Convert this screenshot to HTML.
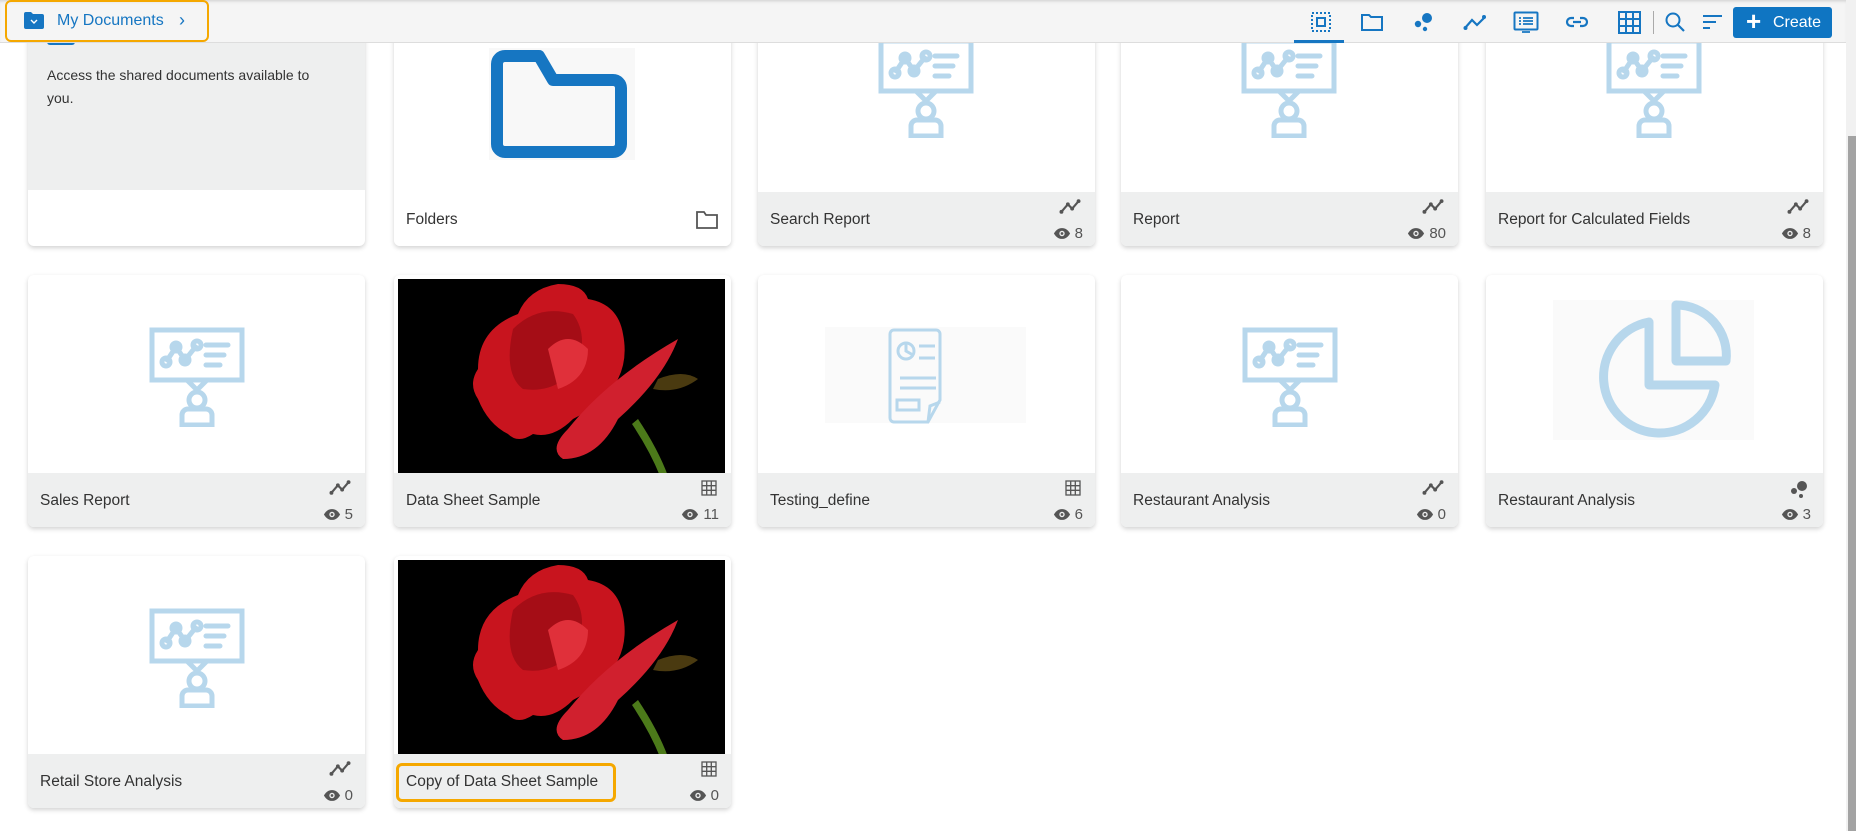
<!DOCTYPE html>
<html><head><meta charset="utf-8"><style>
*{box-sizing:border-box;margin:0;padding:0}
body{width:1856px;height:831px;overflow:hidden;background:#fff;font-family:"Liberation Sans",sans-serif;position:relative;color:#333}
.hdr{position:absolute;left:0;top:0;width:1846px;height:43px;background:#f5f5f5;border-bottom:1px solid #ddd;box-shadow:inset 0 3px 3px -2px #ccc;z-index:5}
.crumb{position:absolute;left:5px;top:0;width:204px;height:42px;border:2.5px solid #f5a800;border-radius:6px}
.crumb .t{position:absolute;left:50px;top:10px;font-size:16px;color:#1676c2}
.hi{position:absolute;top:11px}
.create{position:absolute;left:1733px;top:7px;width:99px;height:31px;background:#0f75c2;border-radius:3px;color:#fff;font-size:16px;line-height:31px;padding-left:40px}
.card{position:absolute;width:337px;height:252px;border-radius:6px;background:#fff;box-shadow:0 2px 5px rgba(0,0,0,.18);overflow:hidden}
.ft{position:absolute;left:0;bottom:0;width:100%;height:54px;background:#eeefef}
.ft .n{position:absolute;left:12px;top:19px;font-size:15.5px;color:#333}
.ft .ty{position:absolute;right:14px;top:7px}
.ft .ey{position:absolute;right:12px;bottom:4px;font-size:15px;color:#555;display:flex;align-items:center;gap:4px}
.sb{position:absolute;left:1846px;top:0;width:10px;height:831px;background:#f1f1f1}
.sb div{position:absolute;left:2px;top:136px;width:8px;height:695px;background:#a3a3a3}
</style></head><body>
<svg width="0" height="0" style="position:absolute"><defs>
<symbol id="pres" viewBox="0 0 96 100"><g fill="none" stroke="#b7d7ec" stroke-width="5"><rect x="3" y="3" width="90" height="50"/><path d="M38 53l10 10 10-10"/><circle cx="48" cy="73" r="8"/><path d="M33 98v-10a6 6 0 0 1 6-6h18a6 6 0 0 1 6 6v10z"/><path d="M17 35l10-15 9 13 12-15" /><circle cx="17" cy="35" r="4"/><circle cx="27" cy="20" r="4"/><circle cx="36" cy="33" r="4"/><circle cx="48" cy="18" r="4"/><path d="M57 18h22M57 28h18M57 38h14" stroke-linecap="round"/></g></symbol>
<symbol id="line" viewBox="0 0 20 14"><path d="M2 12l6-7 4 4 6-7" fill="none" stroke="#555" stroke-width="2"/><circle cx="2" cy="12" r="1.8" fill="#555"/><circle cx="8" cy="5" r="1.8" fill="#555"/><circle cx="12" cy="9" r="1.8" fill="#555"/><circle cx="18" cy="2" r="1.8" fill="#555"/></symbol>
<symbol id="grid" viewBox="0 0 16 16"><g fill="none" stroke="#555" stroke-width="1.3"><rect x="1" y="1" width="14" height="14"/><path d="M5.7 1v14M10.3 1v14M1 5.7h14M1 10.3h14"/></g></symbol>
<symbol id="eye" viewBox="0 0 20 14"><path d="M1 7c3-5 6-6 9-6s6 1 9 6c-3 5-6 6-9 6s-6-1-9-6z" fill="#555"/><circle cx="10" cy="7" r="3" fill="#eeefef"/><circle cx="10" cy="7" r="1.5" fill="#555"/></symbol>
<symbol id="rose" viewBox="0 0 327 197"><rect width="327" height="197" fill="#000"/><path d="M240 140q20 30 30 57h-8q-10-25-28-52z" fill="#4c7a1a"/><path d="M260 100q25-10 40 0q-20 15-45 10z" fill="#4a3a10"/><path d="M80 90q0-40 40-55q10-25 40-30q25 0 30 15q30 5 35 35q5 25-5 45q-15 25-45 40q-20 20-40 15q-15 10-25 0q-20-10-30-35q-10-15 0-30z" fill="#c8141e"/><path d="M115 50q25-25 60-15q15 20 5 50q-20 30-55 25q-20-15-10-60z" fill="#a50d16"/><path d="M150 70q20-20 40 0q0 30-30 40z" fill="#e0303a"/><path d="M170 150q40-50 110-90q-15 40-60 80q-20 40-55 40q-15-10 5-30z" fill="#d0202e"/></symbol>
</defs></svg>

<div class="hdr">
 <div class="crumb"><svg style="position:absolute;left:17px;top:10px" width="20" height="17" viewBox="0 0 20 17"><path d="M0 2a2 2 0 0 1 2-2h5l2 2h9a2 2 0 0 1 2 2v11a2 2 0 0 1-2 2H2a2 2 0 0 1-2-2z" fill="#1676c2"/><path d="M7 8l3 3 3-3" fill="none" stroke="#fff" stroke-width="1.4"/></svg><span class="t">My Documents</span><span style="position:absolute;left:172px;top:8px;font-size:18px;color:#1676c2">&#8250;</span></div>
 <svg class="hi" style="left:1310px" width="22" height="22" viewBox="0 0 22 22"><rect x="2" y="2" width="18" height="18" fill="none" stroke="#1676c2" stroke-width="2" stroke-dasharray="2 2"/><rect x="7" y="7" width="8" height="8" fill="none" stroke="#1676c2" stroke-width="2"/></svg>
 <div style="position:absolute;left:1294px;top:40px;width:50px;height:3px;background:#1676c2"></div>
 <svg class="hi" style="left:1360px" width="24" height="22" viewBox="0 0 24 22"><path d="M2 4h7l2 2h11v13H2z" fill="none" stroke="#1676c2" stroke-width="2"/></svg>
 <svg class="hi" style="left:1413px" width="22" height="22" viewBox="0 0 22 22"><circle cx="14" cy="7" r="5" fill="#1676c2"/><circle cx="5" cy="13" r="3.2" fill="#1676c2"/><circle cx="12" cy="18" r="2.2" fill="#1676c2"/></svg>
 <svg class="hi" style="left:1463px" width="24" height="22" viewBox="0 0 24 22"><path d="M2 17l7-8 5 5 8-8" fill="none" stroke="#1676c2" stroke-width="2.2"/><circle cx="2.5" cy="17" r="2" fill="#1676c2"/><circle cx="21" cy="6" r="2" fill="#1676c2"/></svg>
 <svg class="hi" style="left:1513px" width="26" height="24" viewBox="0 0 26 24"><rect x="1.5" y="1.5" width="23" height="17" rx="1" fill="none" stroke="#1676c2" stroke-width="2"/><path d="M6 7h2M10 7h10M6 10h2M10 10h10M6 13h2M10 13h10M9 21h8" stroke="#1676c2" stroke-width="1.8"/></svg>
 <svg class="hi" style="left:1565px" width="24" height="22" viewBox="0 0 24 22"><path d="M9 7H6a4 4 0 0 0 0 8h3M15 7h3a4 4 0 0 1 0 8h-3M8 11h8" fill="none" stroke="#1676c2" stroke-width="2.2"/></svg>
 <svg class="hi" style="left:1618px" width="23" height="23" viewBox="0 0 23 23"><g fill="none" stroke="#1676c2" stroke-width="2"><rect x="1" y="1" width="21" height="21"/><path d="M8 1v21M15 1v21M1 8h21M1 15h21"/></g></svg>
 <div style="position:absolute;left:1653px;top:11px;width:1px;height:23px;background:#aaa"></div>
 <svg class="hi" style="left:1664px" width="22" height="22" viewBox="0 0 22 22"><circle cx="9" cy="9" r="6.5" fill="none" stroke="#1676c2" stroke-width="2"/><path d="M14 14l6 6" stroke="#1676c2" stroke-width="2.2"/></svg>
 <svg class="hi" style="left:1703px;top:14px" width="20" height="16" viewBox="0 0 20 16"><path d="M0 2h19M0 8h13M0 14h7" stroke="#1676c2" stroke-width="2"/></svg>
 <div class="create"><span style="position:absolute;left:13px;top:-1px;font-size:26px;font-weight:bold">+</span>Create</div>
</div>

<!-- Row 1 -->
<div class="card" style="left:28px;top:-6px"><div style="position:absolute;left:0;top:0;width:100%;height:196px;background:#eeefef"></div><div style="position:absolute;left:19px;top:44px;width:28px;height:7px;border:2px solid #1676c2;border-top:none;border-radius:0 0 3px 3px"></div><div style="position:absolute;left:19px;top:70px;width:285px;font-size:14px;line-height:23px;color:#333">Access the shared documents available to you.</div></div>
<div class="card" style="left:394px;top:-6px"><div style="position:absolute;left:95px;top:54px;width:146px;height:112px;background:#f8f8f8"></div><svg style="position:absolute;left:95px;top:54px" width="146" height="112" viewBox="0 0 146 112"><path d="M16 8h34l14 24h60a8 8 0 0 1 8 8v56a8 8 0 0 1-8 8H16a8 8 0 0 1-8-8V16a8 8 0 0 1 8-8z" fill="none" stroke="#1676c2" stroke-width="12" stroke-linejoin="round"/></svg><div class="ft" style="background:#fff"><span class="n">Folders</span><svg style="position:absolute;right:13px;top:18px" width="22" height="19" viewBox="0 0 22 19"><path d="M1 2h7l2 3h11v13H1z" fill="none" stroke="#555" stroke-width="1.8"/></svg></div></div>
<div class="card" style="left:758px;top:-6px"><svg style="position:absolute;left:120px;top:44px" width="96" height="100"><use href="#pres"/></svg><div class="ft"><span class="n">Search Report</span><svg class="ty" width="22" height="15"><use href="#line"/></svg><span class="ey"><svg width="18" height="13"><use href="#eye"/></svg>8</span></div></div>
<div class="card" style="left:1121px;top:-6px"><svg style="position:absolute;left:120px;top:44px" width="96" height="100"><use href="#pres"/></svg><div class="ft"><span class="n">Report</span><svg class="ty" width="22" height="15"><use href="#line"/></svg><span class="ey"><svg width="18" height="13"><use href="#eye"/></svg>80</span></div></div>
<div class="card" style="left:1486px;top:-6px"><svg style="position:absolute;left:120px;top:44px" width="96" height="100"><use href="#pres"/></svg><div class="ft"><span class="n">Report for Calculated Fields</span><svg class="ty" width="22" height="15"><use href="#line"/></svg><span class="ey"><svg width="18" height="13"><use href="#eye"/></svg>8</span></div></div>

<!-- Row 2 -->
<div class="card" style="left:28px;top:275px"><svg style="position:absolute;left:121px;top:52px" width="96" height="100"><use href="#pres"/></svg><div class="ft"><span class="n">Sales Report</span><svg class="ty" width="22" height="15"><use href="#line"/></svg><span class="ey"><svg width="18" height="13"><use href="#eye"/></svg>5</span></div></div>
<div class="card" style="left:394px;top:275px"><svg style="position:absolute;left:4px;top:4px" width="327" height="197"><use href="#rose"/></svg><div class="ft"><span class="n">Data Sheet Sample</span><svg class="ty" width="16" height="16"><use href="#grid"/></svg><span class="ey"><svg width="18" height="13"><use href="#eye"/></svg>11</span></div></div>
<div class="card" style="left:758px;top:275px"><div style="position:absolute;left:67px;top:52px;width:201px;height:96px;background:#fafafa"></div><svg style="position:absolute;left:128px;top:53px" width="80" height="96" viewBox="0 0 80 96"><g fill="none" stroke="#b7d7ec" stroke-width="3"><path d="M8 2h42a4 4 0 0 1 4 4v66l-12 22H8a4 4 0 0 1-4-4V6a4 4 0 0 1 4-4z"/><path d="M42 94l2-16 10-4"/><circle cx="20" cy="23" r="8"/><path d="M20 15v8l7 4M33 18h16M33 30h16M14 50h36M14 60h36"/><rect x="11" y="72" width="22" height="10"/></g></svg><div class="ft"><span class="n">Testing_define</span><svg class="ty" width="16" height="16"><use href="#grid"/></svg><span class="ey"><svg width="18" height="13"><use href="#eye"/></svg>6</span></div></div>
<div class="card" style="left:1121px;top:275px"><svg style="position:absolute;left:121px;top:52px" width="96" height="100"><use href="#pres"/></svg><div class="ft"><span class="n">Restaurant Analysis</span><svg class="ty" width="22" height="15"><use href="#line"/></svg><span class="ey"><svg width="18" height="13"><use href="#eye"/></svg>0</span></div></div>
<div class="card" style="left:1486px;top:275px"><div style="position:absolute;left:67px;top:25px;width:201px;height:140px;background:#fafafa"></div><svg style="position:absolute;left:111px;top:25px" width="145" height="145" viewBox="0 0 145 145"><g fill="none" stroke="#b7d7ec" stroke-width="9" stroke-linejoin="round"><path d="M52 22A56 56 0 1 0 118 85H52z"/><path d="M79 5a50 50 0 0 1 50 56H79z"/></g></svg><div class="ft"><span class="n">Restaurant Analysis</span><svg class="ty" width="20" height="18" viewBox="0 0 20 18"><circle cx="13" cy="6" r="5" fill="#555"/><circle cx="5" cy="11" r="3" fill="#555"/><circle cx="12" cy="16" r="2" fill="#555"/></svg><span class="ey"><svg width="18" height="13"><use href="#eye"/></svg>3</span></div></div>

<!-- Row 3 -->
<div class="card" style="left:28px;top:556px"><svg style="position:absolute;left:121px;top:52px" width="96" height="100"><use href="#pres"/></svg><div class="ft"><span class="n">Retail Store Analysis</span><svg class="ty" width="22" height="15"><use href="#line"/></svg><span class="ey"><svg width="18" height="13"><use href="#eye"/></svg>0</span></div></div>
<div class="card" style="left:394px;top:556px"><svg style="position:absolute;left:4px;top:4px" width="327" height="197"><use href="#rose"/></svg><div class="ft"><span class="n">Copy of Data Sheet Sample</span><svg class="ty" width="16" height="16"><use href="#grid"/></svg><span class="ey"><svg width="18" height="13"><use href="#eye"/></svg>0</span></div></div>
<div style="position:absolute;left:396px;top:763px;width:220px;height:39px;border:3px solid #f5a800;border-radius:6px"></div>

<div class="sb"><div></div></div>
</body></html>
